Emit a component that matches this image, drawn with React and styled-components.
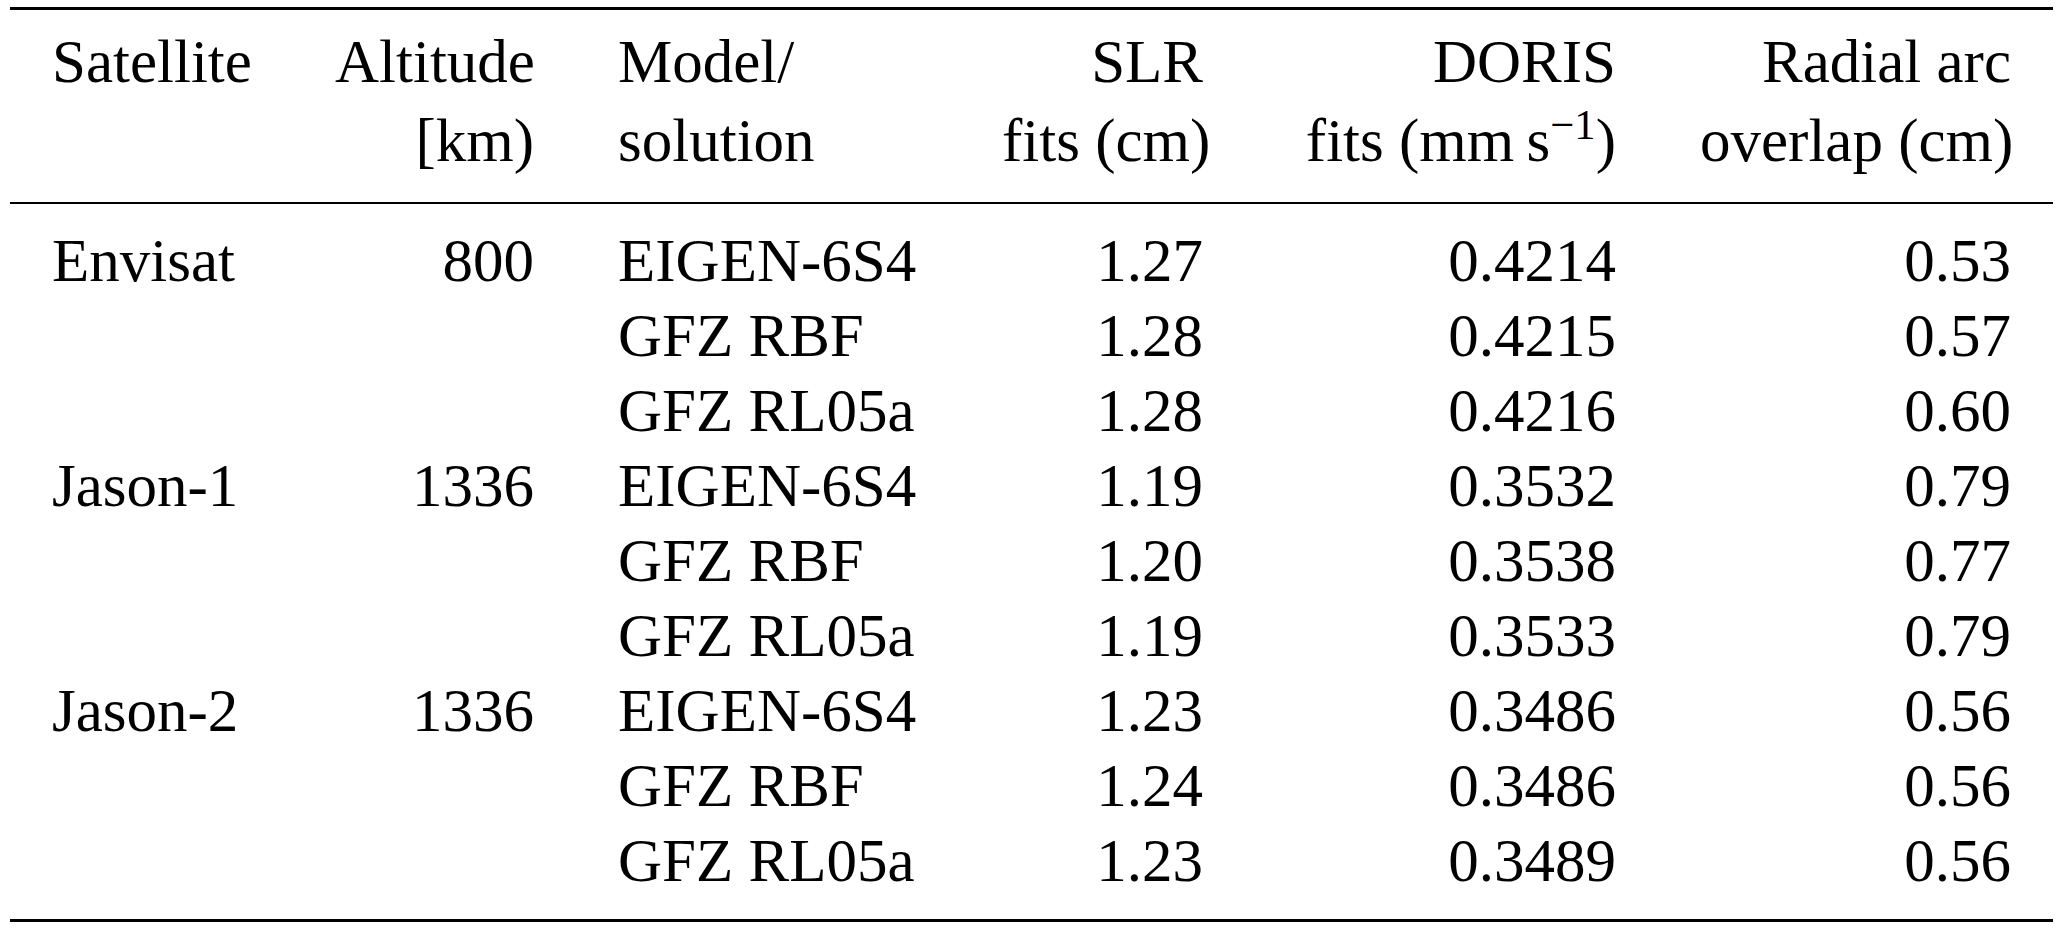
import React from "react";
import styled, { createGlobalStyle } from "styled-components";

const GlobalStyle = createGlobalStyle`
  body {
    margin: 0;
    background: #fff;
  }
`;

const Page = styled.div`
  padding: 7px 14px 0 10px;
  font-family: "Liberation Serif", "Times New Roman", serif;
  font-size: 61px;
  color: #000;
`;

const Table = styled.table`
  width: 2043px;
  table-layout: fixed;
  border-collapse: separate;
  border-spacing: 0;
  border-top: 3px solid #000;
  border-bottom: 3px solid #000;
`;

const HeadCell = styled.th`
  font-weight: normal;
  text-align: ${(p) => p.$align};
  vertical-align: top;
  padding: 12px 42px 22px;
  line-height: 79px;
  white-space: nowrap;
  border-bottom: 2px solid #000;
`;

const Line = styled.span`
  display: block;
  height: 79px;
`;

const Sup = styled.sup`
  font-size: 0.7em;
  line-height: 0;
  vertical-align: 0.52em;
`;

const Row = styled.tr`
  &:first-child td {
    padding-top: 19px;
  }
  &:last-child td {
    padding-bottom: 21px;
  }
`;

const Cell = styled.td`
  text-align: ${(p) => p.$align};
  padding: 0 42px;
  line-height: 75px;
  white-space: nowrap;
`;

const columns = [
  { width: 283, align: "left", head: ["Satellite", ""] },
  { width: 283, align: "right", head: ["Altitude", "[km)"] },
  { width: 384, align: "left", head: ["Model/", "solution"] },
  { width: 285, align: "right", head: ["SLR", "fits (cm)"] },
  {
    width: 413,
    align: "right",
    head: [
      "DORIS",
      <>
        fits (mm{"\u2009"}s<Sup>−1</Sup>)
      </>,
    ],
  },
  { width: 395, align: "right", head: ["Radial arc", "overlap (cm)"] },
];

const rows = [
  ["Envisat", "800", "EIGEN-6S4", "1.27", "0.4214", "0.53"],
  ["", "", "GFZ RBF", "1.28", "0.4215", "0.57"],
  ["", "", "GFZ RL05a", "1.28", "0.4216", "0.60"],
  ["Jason-1", "1336", "EIGEN-6S4", "1.19", "0.3532", "0.79"],
  ["", "", "GFZ RBF", "1.20", "0.3538", "0.77"],
  ["", "", "GFZ RL05a", "1.19", "0.3533", "0.79"],
  ["Jason-2", "1336", "EIGEN-6S4", "1.23", "0.3486", "0.56"],
  ["", "", "GFZ RBF", "1.24", "0.3486", "0.56"],
  ["", "", "GFZ RL05a", "1.23", "0.3489", "0.56"],
];

const App = () => {
  return (
    <Page>
      <GlobalStyle />
      <Table>
        <colgroup>
          {columns.map((c, i) => (
            <col key={i} style={{ width: c.width }} />
          ))}
        </colgroup>
        <thead>
          <tr>
            {columns.map((c, i) => (
              <HeadCell key={i} $align={c.align}>
                <Line>{c.head[0]}</Line>
                <Line>{c.head[1]}</Line>
              </HeadCell>
            ))}
          </tr>
        </thead>
        <tbody>
          {rows.map((r, i) => (
            <Row key={i}>
              {r.map((v, j) => (
                <Cell key={j} $align={columns[j].align}>
                  {v}
                </Cell>
              ))}
            </Row>
          ))}
        </tbody>
      </Table>
    </Page>
  );
};

export default App;
